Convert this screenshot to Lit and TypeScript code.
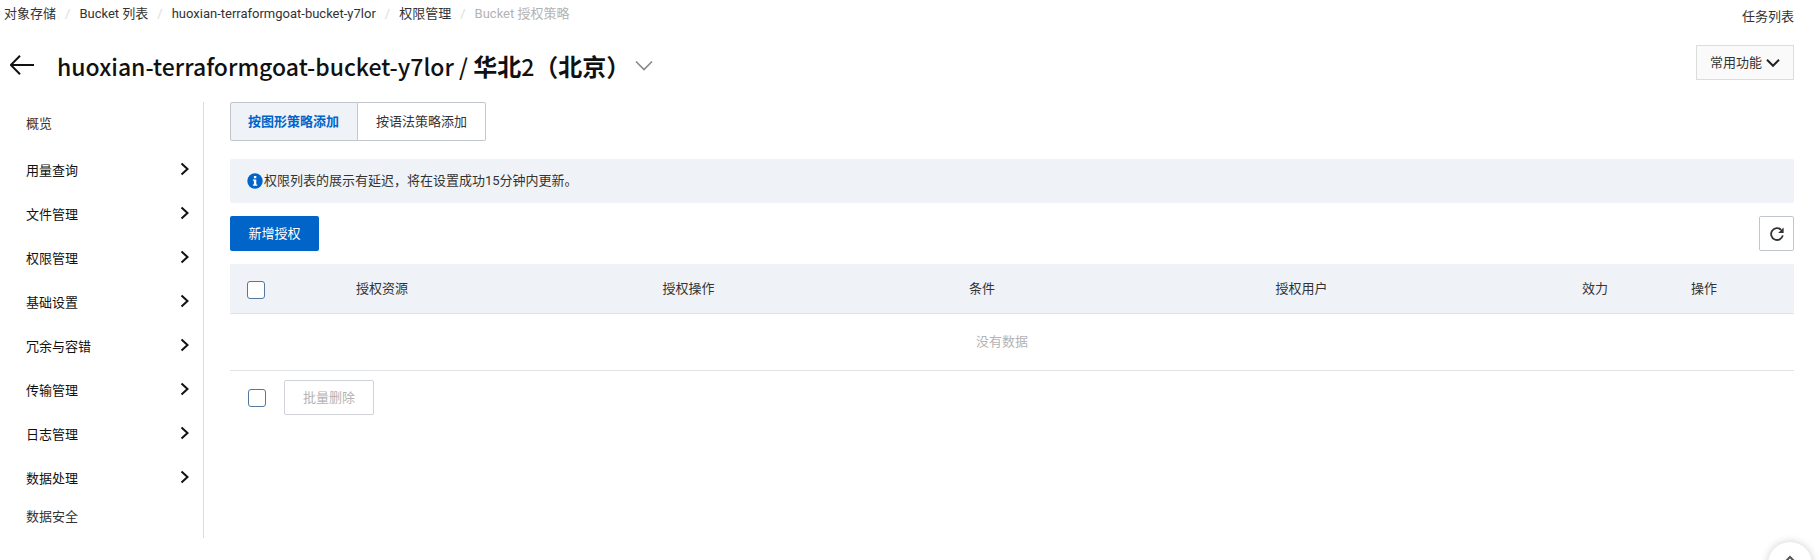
import { LitElement, html, css, svg } from "lit";
import { customElement, state } from "lit/decorators.js";

const chevron = svg`<path d="M1.5 1.5 7.5 7 1.5 12.5" />`;

@customElement("side-nav")
class SideNav extends LitElement {
  static styles = css`
    :host {
      display: block;
      flex: 0 0 204px;
      box-sizing: border-box;
      border-right: 1px solid #dcdcdc;
      padding-bottom: 5px;
    }
    .link {
      display: flex;
      align-items: center;
      height: 44px;
      padding: 0 14px 0 26px;
      color: #333;
      text-decoration: none;
    }
    .link.last {
      height: 32px;
    }
    .groups {
      margin: 0;
      padding: 3px 0 0;
      list-style: none;
    }
    .group {
      display: flex;
      align-items: center;
      justify-content: space-between;
      box-sizing: border-box;
      width: 100%;
      height: 44px;
      padding: 0 14px 0 26px;
      border: 0;
      background: none;
      color: #111;
      font: inherit;
      cursor: pointer;
    }
    .arrow {
      width: 9px;
      height: 14px;
      margin-bottom: 4px;
      fill: none;
      stroke: #111;
      stroke-width: 2;
    }
  `;

  private groups = ["用量查询", "文件管理", "权限管理", "基础设置", "冗余与容错", "传输管理", "日志管理", "数据处理"];

  render() {
    return html`
      <a class="link" href="#overview">概览</a>
      <ul class="groups">
        ${this.groups.map(
          (name) => html`<li>
            <button class="group" type="button">
              ${name}<svg class="arrow" viewBox="0 0 9 14" aria-hidden="true">${chevron}</svg>
            </button>
          </li>`
        )}
      </ul>
      <a class="link last" href="#security">数据安全</a>
    `;
  }
}

@customElement("policy-panel")
class PolicyPanel extends LitElement {
  static styles = css`
    :host {
      display: block;
      flex: 1;
      min-width: 0;
    }
    button {
      box-sizing: border-box;
      font: inherit;
      cursor: pointer;
    }
    .tabs {
      display: flex;
    }
    .tab {
      height: 39px;
      padding: 0 18px;
      border: 1px solid #c0c6cc;
      border-radius: 0 2px 2px 0;
      background: #fff;
      color: #333;
    }
    .tab + .tab {
      border-left: 0;
    }
    .tab:first-child {
      padding-left: 17px;
      border-radius: 2px 0 0 2px;
    }
    .tab.active {
      background: #eff3f8;
      color: #0064c8;
      font-weight: 700;
    }
    .notice {
      display: flex;
      align-items: center;
      gap: 1px;
      height: 44px;
      margin: 18px 0 13px;
      padding: 0 17px;
      border-radius: 2px;
      background: #eff3f8;
    }
    .info {
      width: 16px;
      height: 16px;
    }
    .toolbar {
      display: flex;
      justify-content: space-between;
      margin-bottom: 13px;
    }
    .primary {
      min-width: 89px;
      height: 35px;
      padding: 0 18px;
      border: 0;
      border-radius: 2px;
      background: #0064c8;
      color: #fff;
    }
    .refresh {
      display: grid;
      place-items: center;
      width: 35px;
      height: 35px;
      padding: 0;
      border: 1px solid #c0c6cc;
      border-radius: 2px;
      background: #fff;
    }
    .refresh svg {
      width: 16px;
      height: 16px;
    }
    .grid {
      width: 100%;
      table-layout: fixed;
      border-collapse: separate;
      border-spacing: 0;
    }
    .grid th,
    .empty {
      box-sizing: border-box;
    }
    .grid th {
      height: 50px;
      padding: 0 16px;
      border-bottom: 1px solid #e0e3e6;
      background: #eff3f8;
      font-weight: 400;
      text-align: left;
    }
    .grid .pick {
      width: 110px;
      padding: 2px 16px 0 17px;
    }
    .effect {
      width: 109px;
    }
    .action {
      width: 119px;
    }
    .empty {
      height: 57px;
      padding: 0 20px 0 0;
      border-bottom: 1px solid #e0e3e6;
      color: #b3b3b3;
      text-align: center;
    }
    .check {
      display: block;
      appearance: none;
      box-sizing: border-box;
      width: 18px;
      height: 18px;
      margin: 0;
      border: 1px solid #53779d;
      border-radius: 3px;
      background: #fff;
    }
    .check:checked {
      background: #0064c8;
    }
    .batch {
      display: flex;
      align-items: center;
      gap: 18px;
      padding: 9px 18px;
    }
    .delete {
      height: 35px;
      padding: 0 18px;
      border: 1px solid #d0d4d8;
      border-radius: 2px;
      background: #fff;
      color: #b3b3b3;
      cursor: default;
    }
  `;

  @state() private active = 0;

  render() {
    const tabs = ["按图形策略添加", "按语法策略添加"];
    return html`
      <div class="tabs" role="tablist">
        ${tabs.map(
          (name, i) => html`<button
            class="tab ${i === this.active ? "active" : ""}"
            role="tab"
            aria-selected=${i === this.active}
            @click=${() => (this.active = i)}
          >${name}</button>`
        )}
      </div>
      <div class="notice">
        <svg class="info" viewBox="0 0 16 16" aria-hidden="true">
          <circle cx="8" cy="8" r="7.7" fill="#0064c8" />
          <path d="M6.9 3h2.4v2.2H6.9zM5.9 6.5h3.4v5h1v1.2H5.9v-1.2h1V7.7h-1z" fill="#fff" />
        </svg>
        <span>权限列表的展示有延迟，将在设置成功15分钟内更新。</span>
      </div>
      <div class="toolbar">
        <button class="primary" type="button">新增授权</button>
        <button class="refresh" type="button" aria-label="刷新">
          <svg viewBox="0 0 16 16" aria-hidden="true">
            <path d="M12.2 3.9A5.9 5.9 0 1 0 13.8 9.4" fill="none" stroke="#333" stroke-width="1.8" />
            <path d="M14.6 1.6V7H9.2z" fill="#333" />
          </svg>
        </button>
      </div>
      <table class="grid">
        <thead>
          <tr>
            <th class="pick"><input class="check" type="checkbox" aria-label="全选" /></th>
            <th>授权资源</th>
            <th>授权操作</th>
            <th>条件</th>
            <th>授权用户</th>
            <th class="effect">效力</th>
            <th class="action">操作</th>
          </tr>
        </thead>
        <tbody>
          <tr>
            <td class="empty" colspan="7">没有数据</td>
          </tr>
        </tbody>
      </table>
      <div class="batch">
        <input class="check" type="checkbox" aria-label="全选" />
        <button class="delete" type="button" disabled>批量删除</button>
      </div>
    `;
  }
}

@customElement("app-root")
class AppRoot extends LitElement {
  static styles = css`
    :host {
      display: block;
      min-height: 100vh;
      background: #fff;
      color: #333;
      font: 13px/20px Roboto, "Noto Sans CJK SC", sans-serif;
    }
    .top {
      display: flex;
      justify-content: space-between;
      padding: 4px 26px 0 4px;
    }
    .crumbs {
      display: flex;
      margin: 0;
      padding: 0;
      list-style: none;
    }
    .crumb + .crumb::before {
      content: "/";
      padding: 0 9px;
      color: #dcdcdc;
    }
    a {
      color: inherit;
      text-decoration: none;
    }
    .current {
      color: #b3b3b3;
    }
    .tasks {
      padding-top: 3px;
    }
    .head {
      display: flex;
      align-items: center;
      height: 36px;
      padding: 21px 26px 18px 10px;
    }
    .back,
    .switch {
      display: flex;
      padding: 0;
      border: 0;
      background: none;
      cursor: pointer;
    }
    .back svg {
      width: 25px;
      height: 22px;
    }
    .title {
      margin: 0 5px 0 22px;
      color: #111;
      font-family: "Noto Sans CJK SC", sans-serif;
      font-size: 23px;
      line-height: 36px;
      font-weight: 500;
    }
    .region {
      font-size: 24px;
      font-weight: 700;
    }
    .switch svg {
      width: 18px;
      height: 12px;
    }
    .common {
      display: flex;
      align-items: center;
      gap: 4px;
      box-sizing: border-box;
      height: 35px;
      margin: 0 0 7px auto;
      padding: 0 13px;
      border: 1px solid #dcdcdc;
      background: #fafafa;
      color: #333;
      font: inherit;
      cursor: pointer;
    }
    .common svg {
      width: 14px;
      height: 10px;
    }
    .body {
      display: flex;
      align-items: flex-start;
      gap: 26px;
      padding-right: 26px;
    }
    .to-top {
      position: fixed;
      right: 8px;
      bottom: -26px;
      display: flex;
      justify-content: center;
      width: 44px;
      height: 44px;
      padding: 13px 0 0;
      border: 0;
      border-radius: 50%;
      background: #fff;
      box-shadow: 0 0 8px rgba(0, 0, 0, 0.2);
    }
    .to-top svg {
      width: 14px;
      height: 9px;
    }
  `;

  render() {
    return html`
      <header>
        <div class="top">
          <nav aria-label="路径">
            <ol class="crumbs">
              <li class="crumb"><a href="#oss">对象存储</a></li>
              <li class="crumb"><a href="#buckets">Bucket 列表</a></li>
              <li class="crumb"><a href="#bucket">huoxian-terraformgoat-bucket-y7lor</a></li>
              <li class="crumb"><a href="#access">权限管理</a></li>
              <li class="crumb"><span class="current">Bucket 授权策略</span></li>
            </ol>
          </nav>
          <a class="tasks" href="#tasks">任务列表</a>
        </div>
        <div class="head">
          <button class="back" type="button" aria-label="返回">
            <svg viewBox="0 0 25 22" fill="none" stroke="#111" stroke-width="2" aria-hidden="true">
              <path d="M24 10H1M10 .8 .8 10 10 19.2" />
            </svg>
          </button>
          <h1 class="title">huoxian-terraformgoat-bucket-y7lor / <span class="region">华北</span>2<span class="region">（北京）</span></h1>
          <button class="switch" type="button" aria-label="切换 Bucket">
            <svg viewBox="0 0 18 12" fill="none" stroke="#888" stroke-width="1.6" aria-hidden="true">
              <path d="M1 1.5l8 8 8-8" />
            </svg>
          </button>
          <button class="common" type="button">
            常用功能
            <svg viewBox="0 0 14 10" fill="none" stroke="#222" stroke-width="2" aria-hidden="true">
              <path d="M1 1.8l6 6 6-6" />
            </svg>
          </button>
        </div>
      </header>
      <div class="body">
        <side-nav></side-nav>
        <policy-panel></policy-panel>
      </div>
      <button class="to-top" type="button" aria-label="返回顶部">
        <svg viewBox="0 0 14 9" fill="none" stroke="#555" stroke-width="2" aria-hidden="true">
          <path d="M1 8l6-6 6 6" />
        </svg>
      </button>
    `;
  }
}
